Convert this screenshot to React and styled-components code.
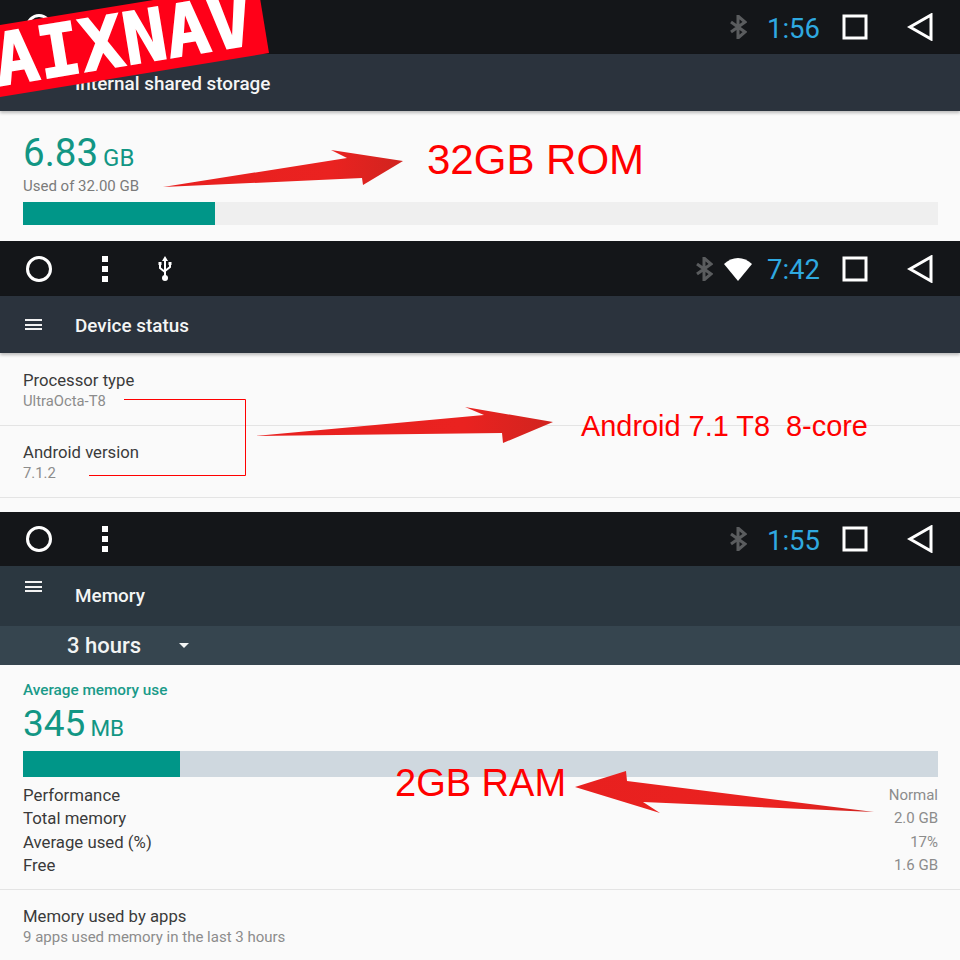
import React from 'react';
import styled, { createGlobalStyle } from 'styled-components';

const GlobalStyle = createGlobalStyle`
  html, body {
    margin: 0;
    padding: 0;
    background: #fafafa;
    font-family: Roboto, "Liberation Sans", sans-serif;
  }
`;

const Page = styled.div`
  position: relative;
  width: 960px;
  height: 960px;
  overflow: hidden;
`;

const Panel = styled.section`
  height: ${(props) => props.$height}px;
  display: flex;
  flex-direction: column;
  background: #fafafa;
`;

const Bar = styled.div`
  flex: none;
  height: ${(props) => props.$height || 54}px;
  display: flex;
  align-items: center;
  background: #141619;
  color: #fff;
`;

const IconSlot = styled.div`
  width: ${(props) => props.$width}px;
  margin-left: ${(props) => props.$left || 0}px;
  flex: none;
  display: flex;
  align-items: center;
  justify-content: center;
`;

const Spacer = styled.div`
  flex: 1;
`;

const Clock = styled.span`
  width: 75px;
  margin-left: ${(props) => props.$gap}px;
  padding-top: 2px;
  font-size: 27.5px;
  color: #2fa9e0;
  white-space: nowrap;
`;

const Toolbar = styled.div`
  flex: none;
  position: relative;
  height: ${(props) => props.$height}px;
  padding-bottom: ${(props) => props.$lift || 0}px;
  box-sizing: border-box;
  display: flex;
  align-items: center;
  background: ${(props) => props.$color || '#2b333d'};
  box-shadow: ${(props) => (props.$flat ? 'none' : '0 2px 3px rgba(0, 0, 0, 0.25)')};
`;

const MenuIcon = styled.div`
  position: absolute;
  left: 25px;
  top: ${(props) => props.$top}px;
  width: 17px;
  height: 11px;
  border-top: 2px solid #f2f2f2;
  border-bottom: 2px solid #f2f2f2;
  box-sizing: border-box;

  &::after {
    content: '';
    display: block;
    height: 2px;
    margin-top: 2.5px;
    background: #f2f2f2;
  }
`;

const Title = styled.h1`
  margin: 0 0 0 75px;
  padding-top: 1px;
  font-size: 18.9px;
  font-weight: 500;
  color: #f4f5f5;
`;

const SpinnerBar = styled.div`
  flex: none;
  height: 39px;
  display: flex;
  align-items: center;
  padding-left: 67px;
  background: #36454f;
  color: #f2f4f4;
  font-size: 22px;
  font-weight: 500;
`;

const Caret = styled.span`
  margin-left: 38px;
  width: 0;
  height: 0;
  border-left: 5px solid transparent;
  border-right: 5px solid transparent;
  border-top: 5px solid #f2f4f4;
`;

const Summary = styled.div`
  padding: ${(props) => props.$top}px 22px 0 23px;
`;

const Heading = styled.div`
  font-size: 15.3px;
  line-height: 20px;
  font-weight: 500;
  color: #1a9a89;
`;

const Amount = styled.div`
  height: 40px;
  margin-top: ${(props) => props.$gap || 0}px;
  line-height: 40px;
  font-size: ${(props) => props.$size}px;
  color: #129684;
  white-space: nowrap;

  small {
    margin-left: 5px;
    font-size: ${(props) => props.$unit}px;
  }
`;

const Hint = styled.div`
  font-size: 15px;
  line-height: 26px;
  color: #7b7b7b;
`;

const Track = styled.div`
  height: ${(props) => props.$height}px;
  margin-top: ${(props) => props.$gap}px;
  background: ${(props) => props.$color};
`;

const Fill = styled.div`
  width: ${(props) => props.$width}px;
  height: 100%;
  background: #009688;
`;

const Row = styled.div`
  padding: ${(props) => props.$top}px 23px 0;
  height: ${(props) => props.$height}px;
  box-sizing: border-box;
  border-bottom: ${(props) => (props.$last ? 'none' : '1px solid #e4e4e4')};
`;

const RowTitle = styled.div`
  font-size: 16.7px;
  line-height: 20px;
  color: #3a3a3a;
`;

const RowSub = styled.div`
  font-size: ${(props) => props.$size || 14.8}px;
  line-height: 20px;
  color: #8c8c8c;
`;

const StatGrid = styled.div`
  margin-top: 6px;
  padding: 0 22px 12px 23px;
  display: grid;
  grid-template-columns: 1fr auto;
  grid-auto-rows: 23.5px;
  align-items: center;
  border-bottom: 1px solid #e4e4e4;
`;

const StatName = styled.span`
  font-size: 16.8px;
  color: #3a3a3a;
`;

const StatValue = styled.span`
  justify-self: end;
  font-size: 15px;
  color: #8c8c8c;
`;

const Stamp = styled.div`
  position: absolute;
  left: -31px;
  top: -18px;
  width: 300px;
  height: 71px;
  padding-left: 28px;
  box-sizing: border-box;
  background: #ff0018;
  transform: rotate(-9.3deg);
  transform-origin: bottom right;
  color: #fff;
  font-family: "DejaVu Sans Mono", "Liberation Mono", monospace;
  font-size: 72px;
  font-weight: 700;
  line-height: 71px;
  -webkit-text-stroke: 1.5px #fff;
  white-space: nowrap;
`;

const Note = styled.div`
  position: absolute;
  left: ${(props) => props.$x}px;
  top: ${(props) => props.$y}px;
  font-family: "Liberation Sans", Arial, sans-serif;
  font-size: ${(props) => props.$size}px;
  line-height: 1;
  color: #f00;
  white-space: pre;
`;

const Overlay = styled.svg`
  position: absolute;
  left: 0;
  top: 0;
  pointer-events: none;
`;

const Circle = () => (
  <svg width="28" height="28" viewBox="0 0 28 28">
    <circle cx="14" cy="14" r="11.5" fill="none" stroke="#fff" strokeWidth="3" />
  </svg>
);

const Dots = () => (
  <svg width="8" height="28" viewBox="0 0 8 28">
    <rect x="1" y="1" width="6" height="6" fill="#fff" />
    <rect x="1" y="11" width="6" height="6" fill="#fff" />
    <rect x="1" y="21" width="6" height="6" fill="#fff" />
  </svg>
);

const Usb = () => (
  <svg width="16" height="28" viewBox="0 0 16 28">
    <path d="M8 1 L11 6 H9 V23 H7 V6 H5 Z" fill="#fff" />
    <circle cx="8" cy="23" r="3" fill="#fff" />
    <path d="M3 9 V13 L8 17 M13 9 V12 L8 16" fill="none" stroke="#fff" strokeWidth="2" />
    <rect x="1.5" y="7" width="3" height="3" fill="#fff" />
    <rect x="11.5" y="7" width="3" height="3" fill="#fff" />
  </svg>
);

const BluetoothMark = () => (
  <svg width="18" height="24" viewBox="0 0 18 24">
    <path d="M2 7 L16 17 L9 23 V1 L16 7 L2 17" fill="none" stroke="#5a5c5e" strokeWidth="3" />
  </svg>
);

const Wifi = () => (
  <svg width="30" height="26" viewBox="0 0 30 26">
    <path d="M1 8 C9 0 21 0 29 8 L15 25 Z" fill="#fff" />
  </svg>
);

const Square = () => (
  <svg width="26" height="26" viewBox="0 0 26 26">
    <rect x="2" y="2" width="22" height="22" fill="none" stroke="#fff" strokeWidth="3" />
  </svg>
);

const Back = () => (
  <svg width="26" height="28" viewBox="0 0 26 28">
    <path d="M24 2 V26 L3 14 Z" fill="none" stroke="#fff" strokeWidth="3" />
  </svg>
);

const StatusBar = ({ time, dots, usb, wifi, height }) => (
  <Bar $height={height}>
    <IconSlot $width={28} $left={25}><Circle /></IconSlot>
    {dots && <IconSlot $width={8} $left={48}><Dots /></IconSlot>}
    {usb && <IconSlot $width={16} $left={48}><Usb /></IconSlot>}
    <Spacer />
    <IconSlot $width={24}><BluetoothMark /></IconSlot>
    {wifi && <IconSlot $width={30} $left={7}><Wifi /></IconSlot>}
    <Clock $gap={wifi ? 14 : 17}>{time}</Clock>
    <IconSlot $width={26}><Square /></IconSlot>
    <IconSlot $width={26} $left={39}><Back /></IconSlot>
    <IconSlot $width={27} />
  </Bar>
);

const stats = [
  ['Performance', 'Normal'],
  ['Total memory', '2.0 GB'],
  ['Average used (%)', '17%'],
  ['Free', '1.6 GB'],
];

const arrows = [
  '163,187 347,158 331,150 403,161 363,185 362,178',
  '255,436 484,415 465,407 553,422 503,443 502,433',
  '575,787 626,771 627,781 874,812 643,802 660,813',
];

export default function App() {
  return (
    <Page>
      <GlobalStyle />
      <Panel $height={241}>
        <StatusBar time="1:56" />
        <Toolbar $height={57}>
          <Title>Internal shared storage</Title>
        </Toolbar>
        <Summary $top={22}>
          <Amount $size={38.5} $unit={24}>6.83<small>GB</small></Amount>
          <Hint>Used of 32.00 GB</Hint>
          <Track $height={23} $gap={3} $color="#efefef"><Fill $width={192} /></Track>
        </Summary>
      </Panel>

      <Panel $height={271}>
        <StatusBar time="7:42" dots usb wifi height={55} />
        <Toolbar $height={57}>
          <MenuIcon $top={23} />
          <Title>Device status</Title>
        </Toolbar>
        <Row $top={18} $height={73}>
          <RowTitle>Processor type</RowTitle>
          <RowSub>UltraOcta-T8</RowSub>
        </Row>
        <Row $top={17} $height={72}>
          <RowTitle>Android version</RowTitle>
          <RowSub>7.1.2</RowSub>
        </Row>
      </Panel>

      <Panel $height={448}>
        <StatusBar time="1:55" dots />
        <Toolbar $height={60} $lift={3} $color="#2b3740" $flat>
          <MenuIcon $top={15} />
          <Title>Memory</Title>
        </Toolbar>
        <SpinnerBar>3 hours<Caret /></SpinnerBar>
        <Summary $top={15}>
          <Heading>Average memory use</Heading>
          <Amount $gap={4} $size={37} $unit={22.5}>345<small>MB</small></Amount>
          <Track $height={26} $gap={7} $color="#cfd8df"><Fill $width={157} /></Track>
        </Summary>
        <StatGrid>
          {stats.map(([name, value]) => (
            <React.Fragment key={name}>
              <StatName>{name}</StatName>
              <StatValue>{value}</StatValue>
            </React.Fragment>
          ))}
        </StatGrid>
        <Row $top={17} $height={70} $last>
          <RowTitle>Memory used by apps</RowTitle>
          <RowSub $size={15}>9 apps used memory in the last 3 hours</RowSub>
        </Row>
      </Panel>

      <Stamp>AIXNAV</Stamp>

      <Overlay width="960" height="960" viewBox="0 0 960 960">
        <defs>
          <linearGradient id="arrowRed" x1="0" x2="1" y1="0" y2="0">
            <stop offset="0" stopColor="#e8201f" />
            <stop offset="0.7" stopColor="#ea2220" />
            <stop offset="1" stopColor="#d0241f" />
          </linearGradient>
        </defs>
        {arrows.map((points) => (
          <polygon key={points} points={points} fill="url(#arrowRed)" />
        ))}
        <polyline points="124,399.5 245.5,399.5 245.5,475.5 89,475.5" fill="none" stroke="#f00" strokeWidth="1" />
      </Overlay>

      <Note $x={427} $y={139} $size={42}>32GB ROM</Note>
      <Note $x={581} $y={412} $size={28.9}>{'Android 7.1 T8  8-core'}</Note>
      <Note $x={395} $y={764} $size={38}>2GB RAM</Note>
    </Page>
  );
}
